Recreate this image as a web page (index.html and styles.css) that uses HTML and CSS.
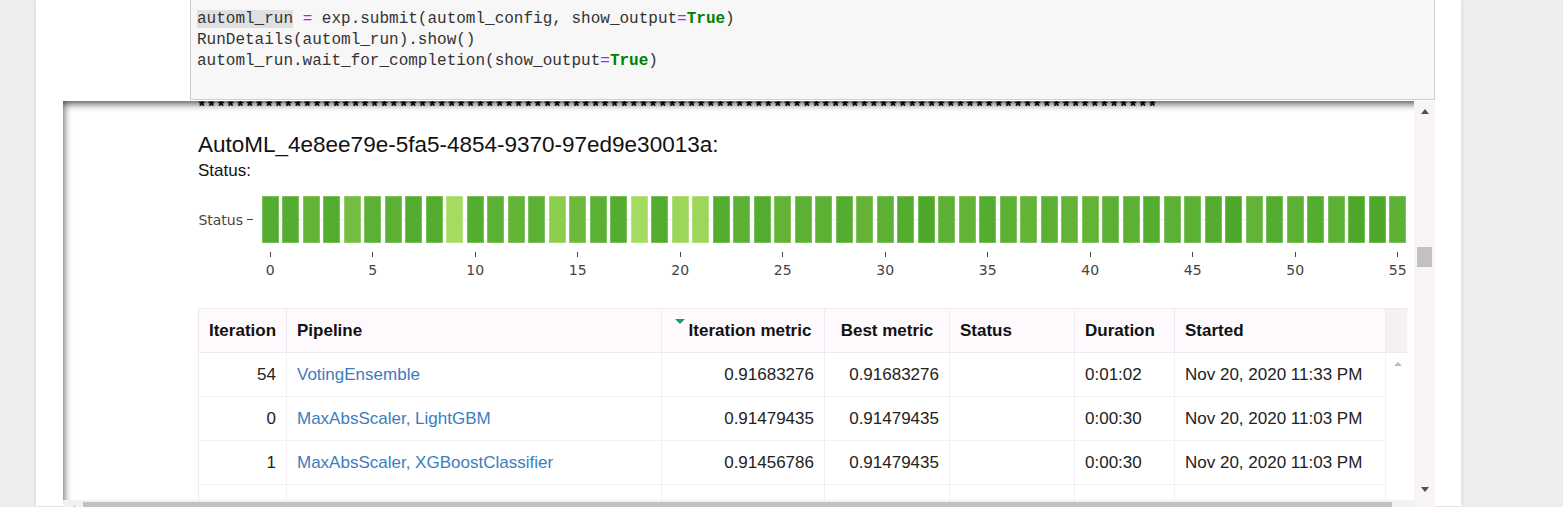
FILE: index.html
```html
<!DOCTYPE html>
<html lang="en">
<head>
<meta charset="utf-8">
<title>AutoML run details</title>
<link rel="stylesheet" href="styles.css">
</head>
<body>
<div class="page">
  <div class="code-cell">
<pre class="code"><span class="hl">automl_run</span> <span class="op">=</span> exp.submit(automl_config, show_output<span class="op">=</span><span class="kw">True</span>)
RunDetails(automl_run).show()
automl_run.wait_for_completion(show_output<span class="op">=</span><span class="kw">True</span>)</pre>
  </div>

  <div class="output">
    <div class="out-main">
      <div class="stars">****************************************************************************************************</div>
      <div class="widget">
        <h2 class="run-title">AutoML_4e8ee79e-5fa5-4854-9370-97ed9e30013a:</h2>
        <div class="status-title">Status:</div>

        <div class="chart">
          <div class="chart-row">
            <div class="y-axis"><span>Status</span><i class="y-tick"></i></div>
            <div class="bars">
              <div class="bar d1"></div><div class="bar d1"></div><div class="bar d3"></div><div class="bar d1"></div><div class="bar l1"></div>
              <div class="bar d2"></div><div class="bar d2"></div><div class="bar d1"></div><div class="bar d1"></div><div class="bar l2"></div>
              <div class="bar d1"></div><div class="bar d2"></div><div class="bar d3"></div><div class="bar d2"></div><div class="bar l3"></div>
              <div class="bar l4"></div><div class="bar d2"></div><div class="bar d1"></div><div class="bar l2"></div><div class="bar d1"></div>
              <div class="bar l5"></div><div class="bar l5"></div><div class="bar d1"></div><div class="bar d2"></div><div class="bar d1"></div>
              <div class="bar d3"></div><div class="bar d2"></div><div class="bar d2"></div><div class="bar d1"></div><div class="bar d3"></div>
              <div class="bar d2"></div><div class="bar d1"></div><div class="bar d0"></div><div class="bar d2"></div><div class="bar d3"></div>
              <div class="bar d1"></div><div class="bar d2"></div><div class="bar d3"></div><div class="bar d2"></div><div class="bar d3"></div>
              <div class="bar d3"></div><div class="bar d2"></div><div class="bar d2"></div><div class="bar d1"></div><div class="bar d2"></div>
              <div class="bar d2"></div><div class="bar d1"></div><div class="bar d0"></div><div class="bar d3"></div><div class="bar d1"></div>
              <div class="bar d2"></div><div class="bar d1"></div><div class="bar d2"></div><div class="bar d0"></div><div class="bar d0"></div>
              <div class="bar d2"></div>
            </div>
          </div>
          <div class="x-axis">
            <div></div>
            <div class="ticks">
              <div class="tk"><i></i><span>0</span></div><div class="tk"></div><div class="tk"></div><div class="tk"></div><div class="tk"></div>
              <div class="tk"><i></i><span>5</span></div><div class="tk"></div><div class="tk"></div><div class="tk"></div><div class="tk"></div>
              <div class="tk"><i></i><span>10</span></div><div class="tk"></div><div class="tk"></div><div class="tk"></div><div class="tk"></div>
              <div class="tk"><i></i><span>15</span></div><div class="tk"></div><div class="tk"></div><div class="tk"></div><div class="tk"></div>
              <div class="tk"><i></i><span>20</span></div><div class="tk"></div><div class="tk"></div><div class="tk"></div><div class="tk"></div>
              <div class="tk"><i></i><span>25</span></div><div class="tk"></div><div class="tk"></div><div class="tk"></div><div class="tk"></div>
              <div class="tk"><i></i><span>30</span></div><div class="tk"></div><div class="tk"></div><div class="tk"></div><div class="tk"></div>
              <div class="tk"><i></i><span>35</span></div><div class="tk"></div><div class="tk"></div><div class="tk"></div><div class="tk"></div>
              <div class="tk"><i></i><span>40</span></div><div class="tk"></div><div class="tk"></div><div class="tk"></div><div class="tk"></div>
              <div class="tk"><i></i><span>45</span></div><div class="tk"></div><div class="tk"></div><div class="tk"></div><div class="tk"></div>
              <div class="tk"><i></i><span>50</span></div><div class="tk"></div><div class="tk"></div><div class="tk"></div><div class="tk"></div>
              <div class="tk"><i></i><span>55</span></div>
            </div>
          </div>
        </div>

        <div class="rtable">
          <div class="thead">
            <div class="th num">Iteration</div>
            <div class="th">Pipeline</div>
            <div class="th num"><span class="sort"></span><span>Iteration metric</span></div>
            <div class="th num">Best metric</div>
            <div class="th">Status</div>
            <div class="th">Duration</div>
            <div class="th">Started</div>
            <div class="th sb-head"></div>
          </div>
          <div class="tbody-wrap">
            <div class="tbody">
              <div class="tr">
                <div class="td r">54</div>
                <div class="td"><a href="#">VotingEnsemble</a></div>
                <div class="td r">0.91683276</div>
                <div class="td r">0.91683276</div>
                <div class="td"></div>
                <div class="td">0:01:02</div>
                <div class="td">Nov 20, 2020 11:33 PM</div>
              </div>
              <div class="tr">
                <div class="td r">0</div>
                <div class="td"><a href="#">MaxAbsScaler, LightGBM</a></div>
                <div class="td r">0.91479435</div>
                <div class="td r">0.91479435</div>
                <div class="td"></div>
                <div class="td">0:00:30</div>
                <div class="td">Nov 20, 2020 11:03 PM</div>
              </div>
              <div class="tr">
                <div class="td r">1</div>
                <div class="td"><a href="#">MaxAbsScaler, XGBoostClassifier</a></div>
                <div class="td r">0.91456786</div>
                <div class="td r">0.91479435</div>
                <div class="td"></div>
                <div class="td">0:00:30</div>
                <div class="td">Nov 20, 2020 11:03 PM</div>
              </div>
              <div class="tr">
                <div class="td r">10</div>
                <div class="td"><a href="#">StandardScalerWrapper, XGBoostClassifier</a></div>
                <div class="td r">0.91408547</div>
                <div class="td r">0.91479435</div>
                <div class="td"></div>
                <div class="td">0:00:34</div>
                <div class="td">Nov 20, 2020 11:04 PM</div>
              </div>
            </div>
            <div class="tscroll"><span class="tri-up light"></span></div>
          </div>
        </div>
      </div>
    </div>

    <div class="vscroll">
      <div class="sbtn"><span class="tri-up"></span></div>
      <div class="vthumb"></div>
      <div class="sbtn bottom"><span class="tri-down"></span></div>
    </div>
    <div class="hscroll">
      <div class="hbtn"><span class="tri-left"></span></div>
      <div class="hthumb"></div>
    </div>
    <div class="corner"></div>
  </div>
</div>
</body>
</html>
```

FILE: styles.css
```css
* { box-sizing: border-box; }

html, body {
  margin: 0;
  height: 100%;
  overflow: hidden;
}

body {
  background: #eeeeee;
  font-family: "Liberation Sans", Arial, sans-serif;
  color: #222;
}

.page {
  margin-left: 36px;
  width: 1425px;
  height: 100%;
  background: #fff;
  box-shadow: 0 0 5px rgba(0, 0, 0, 0.12);
}

/* ---------- code cell ---------- */
.code-cell {
  margin: -1px 0 0 154px;
  width: 1245px;
  height: 101px;
  border: 1px solid #cfcfcf;
  background: #f7f7f7;
  padding: 9px 0 0 6px;
}

.code {
  margin: 0;
  font: 16px/21px "Liberation Mono", "DejaVu Sans Mono", monospace;
  color: #333;
}

.code .hl { background: #e0e0e0; }
.code .op { color: #aa22ff; }
.code .kw { color: #008000; font-weight: bold; }

/* ---------- output area ---------- */
.output {
  margin: 1px 0 0 27px;
  width: 1372px;
  display: grid;
  grid-template-columns: 1fr 21px;
  grid-template-rows: 399px 17px;
  box-shadow: inset 0 2px 8px rgba(0, 0, 0, 0.8);
}

.out-main {
  min-width: 0;
  overflow: hidden;
  padding-left: 135px;
}

.stars {
  margin: -3px 0 0 -1px;
  height: 21px;
  font: bold 16px/21px "Liberation Mono", "DejaVu Sans Mono", monospace;
  color: #000;
  white-space: nowrap;
}

.run-title {
  margin: 13px 0 0;
  font-size: 22.5px;
  line-height: 26px;
  font-weight: normal;
  color: #111;
}

.status-title {
  margin-top: 3px;
  font-size: 17px;
  line-height: 20px;
  color: #111;
}

/* ---------- chart ---------- */
.chart { margin-top: 15px; }

.chart-row {
  display: grid;
  grid-template-columns: 62px 1148px;
  height: 47px;
}

.y-axis {
  display: flex;
  align-items: center;
  justify-content: flex-end;
  padding-right: 7px;
  font: 14px "DejaVu Sans", Verdana, sans-serif;
  color: #444;
}

.y-tick {
  width: 6px;
  height: 1px;
  margin-left: 4px;
  background: #444;
}

.bars {
  display: flex;
  background: linear-gradient(#ebebeb, #ebebeb) 0 23px / 100% 1px no-repeat;
}

.bar {
  flex: 1;
  margin: 0 1.75px;
  box-shadow: inset 0 0 0 1px rgba(255, 255, 255, 0.22);
}

.d0 { background: #4ea82a; }
.d1 { background: #55ad30; }
.d2 { background: #5cb034; }
.d3 { background: #63b337; }
.l1 { background: #74bd42; }
.l2 { background: #a5db60; }
.l3 { background: #8dcd4e; }
.l4 { background: #6cb93c; }
.l5 { background: #9dd75a; }

.x-axis {
  display: grid;
  grid-template-columns: 62px 1148px;
  margin-top: 9px;
  height: 26px;
}

.ticks { display: flex; }

.tk {
  flex: 1;
  display: flex;
  flex-direction: column;
  align-items: center;
}

.tk i {
  width: 1px;
  height: 5px;
  background: #444;
}

.tk span {
  margin-top: 5px;
  font: 14px/16px "DejaVu Sans", Verdana, sans-serif;
  color: #444;
  white-space: nowrap;
}

/* ---------- table ---------- */
.rtable {
  margin-top: 30px;
  width: 1210px;
  border-left: 1px solid #efeaef;
  border-top: 1px solid #efeaef;
}

.thead {
  display: grid;
  grid-template-columns: 88px 375px 163px 125px 125px 100px 211px 21px;
  height: 44px;
  background: #fdf9fd;
}

.th {
  display: flex;
  align-items: center;
  padding: 0 10px;
  border-right: 1px solid #efeaef;
  border-bottom: 1px solid #efeaef;
  font-size: 17px;
  font-weight: bold;
  color: #111;
  white-space: nowrap;
}

.th.num { justify-content: center; }

.th.sb-head {
  background: #f4f0f4;
  border-right: none;
}

.sort {
  align-self: flex-start;
  margin: 10px 4px 0 0;
  width: 0;
  height: 0;
  border-left: 5px solid transparent;
  border-right: 5px solid transparent;
  border-top: 5px solid #1c9c6c;
}

.tbody-wrap {
  display: grid;
  grid-template-columns: 1188px 21px;
}

.tr {
  display: grid;
  grid-template-columns: 88px 375px 163px 125px 125px 100px 211px;
  height: 44px;
}

.td {
  display: flex;
  align-items: center;
  padding: 0 10px;
  border-right: 1px solid #f3eff3;
  border-bottom: 1px solid #f3eff3;
  font-size: 17px;
  color: #222;
  white-space: nowrap;
  overflow: hidden;
}

.td.r { justify-content: flex-end; }

.td a {
  color: #3d7cc0;
  text-decoration: none;
}

.tscroll {
  display: flex;
  justify-content: center;
  background: #fff;
}

/* ---------- arrows ---------- */
.tri-up {
  width: 0;
  height: 0;
  border-left: 4.5px solid transparent;
  border-right: 4.5px solid transparent;
  border-bottom: 5px solid #4f4f4f;
}

.tri-up.light {
  margin-top: 9px;
  border-left-width: 4px;
  border-right-width: 4px;
  border-bottom: 4px solid #bdbdbd;
}

.tri-down {
  width: 0;
  height: 0;
  border-left: 4.5px solid transparent;
  border-right: 4.5px solid transparent;
  border-top: 5px solid #4f4f4f;
}

.tri-left {
  width: 0;
  height: 0;
  border-top: 4px solid transparent;
  border-bottom: 4px solid transparent;
  border-right: 4px solid #4f4f4f;
}

/* ---------- scrollbars ---------- */
.vscroll {
  display: flex;
  flex-direction: column;
  align-items: center;
  background: #f7f3f7;
}

.sbtn {
  width: 21px;
  height: 21px;
  flex: none;
  display: flex;
  align-items: center;
  justify-content: center;
}

.sbtn.bottom { margin-top: auto; }

.vthumb {
  margin-top: 125px;
  width: 15px;
  height: 20px;
  background: #c3c0c3;
}

.hscroll {
  display: flex;
  background: #f1f1f1;
  padding-top: 2px;
}

.hbtn {
  width: 20px;
  height: 15px;
  flex: none;
  display: flex;
  align-items: center;
  justify-content: center;
}

.hthumb {
  width: 1309px;
  height: 15px;
  background: #c1c1c1;
}

.corner { background: #f7f3f7; }
```
